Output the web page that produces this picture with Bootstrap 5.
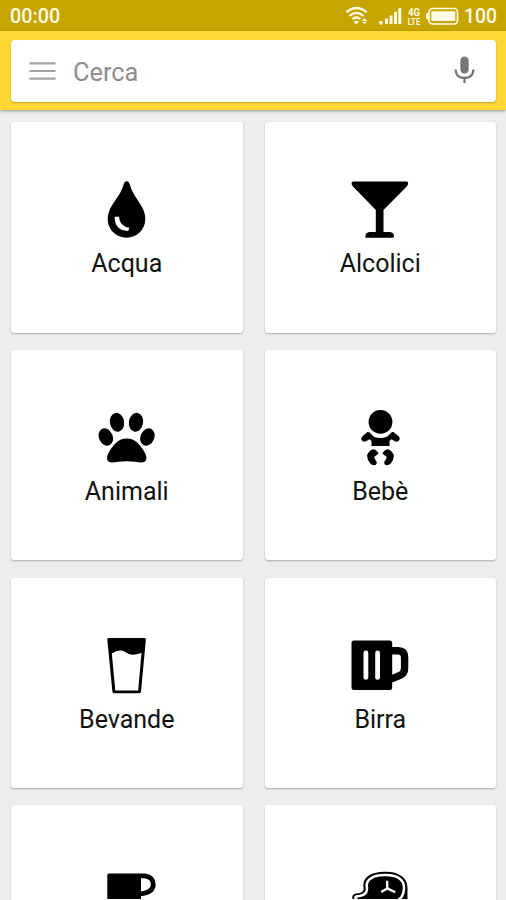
<!DOCTYPE html>
<html lang="it">
<head>
<meta charset="utf-8">
<meta name="viewport" content="width=device-width, initial-scale=1">
<title>Cerca</title>
<link href="https://cdn.jsdelivr.net/npm/bootstrap@5.3.0/dist/css/bootstrap.min.css" rel="stylesheet">
<style>
  body { background: #ededed; font-family: Roboto, "Liberation Sans", sans-serif; height: 900px; overflow: hidden; }
  .status-bar { height: 31px; background: #c7a500; color: #fffbe6; font-size: 19.8px; font-weight: 500; line-height: 33px; padding: 0 9px 0 10px; }
  .battery-level { font-size: 19.3px; }
  .app-bar { height: 79px; background: #fdd835; padding: 9px 10px 8px 11px; box-shadow: 0 1px 3px rgba(0,0,0,.4); }
  .search-box { height: 62px; border-radius: 4px; padding: 0 19px 0 18px; box-shadow: 0 1px 2px rgba(120,90,0,.45); }
  .search-input { font-size: 25.3px; color: #8e8e8e; padding: 4px 0 0; margin-left: 17px; line-height: 1.2; }
  .search-input::placeholder { color: #8e8e8e; opacity: 1; }
  .tiles { display: grid; grid-template-columns: 231.5px 231.5px; gap: 17.3px 22px; padding: 12px 10px 0 11px; }
  .tile { height: 210.5px; border-radius: 3px; padding-top: 57px; box-shadow: 0 1px 2px rgba(0,0,0,.28); color: #000; }
  .tile-partial { height: 94.6px; border-bottom-left-radius: 0; border-bottom-right-radius: 0; overflow: hidden; }
  .tile-label { font-size: 25px; line-height: 30px; margin-top: 10px; color: #111; }
</style>
</head>
<body>
<header>
  <div class="status-bar d-flex justify-content-between">
    <span>00:00</span>
    <div class="d-flex">
      <svg width="120" height="31" viewBox="344 0 120 31" fill="#fffbe6" aria-hidden="true">
        <g fill="none" stroke="#fffbe6" stroke-width="2.3">
          <path d="M346.3 12.2Q356.5 3.8 366.7 12.2M349.4 15.8Q356.5 10 363.6 15.8M352.3 19.2Q356.5 16 360.3 19"/>
        </g>
        <path d="M353.6 21.5Q356.3 19.8 359 21.5L356.3 24.6zM362 21l2.5-3 2.5 3zM362 21.8h5l-2.5 2.4z"/>
        <circle cx="380.8" cy="22.7" r="2"/>
        <path d="M385 18.5h3V24h-3zM389.5 15.5h3V24h-3zM394 11.7h3V24h-3zM398.3 8.3h3V24h-3z"/>
        <g font-family="Roboto, sans-serif" font-weight="700" text-anchor="middle">
          <text x="414" y="16" font-size="10" textLength="12" lengthAdjust="spacingAndGlyphs">4G</text>
          <text x="414" y="24.7" font-size="8.5" textLength="12.5" lengthAdjust="spacingAndGlyphs">LTE</text>
        </g>
        <rect x="429" y="8.5" width="28.5" height="15.5" rx="3.5" fill="none" stroke="#fffbe6" stroke-width="1.7"/>
        <rect x="431.3" y="11.3" width="24" height="9.8" rx="1"/>
        <path d="M428.2 12.5Q426 13 426 16.2Q426 19.4 428.2 20z"/>
      </svg>
      <span class="battery-level">100</span>
    </div>
  </div>
  <div class="app-bar position-relative">
    <div class="search-box bg-white d-flex align-items-center">
      <svg class="flex-shrink-0" width="27" height="20" viewBox="0 0 27 20" fill="none" stroke="#a3a3a3" stroke-width="2.2" aria-hidden="true"><path d="M.5 2.3h26M.5 10h26M.5 17.7h26"/></svg>
      <input class="search-input form-control border-0 shadow-none bg-transparent flex-grow-1" type="text" placeholder="Cerca" aria-label="Cerca">
      <svg class="flex-shrink-0" width="24" height="32" viewBox="0 0 24 32" aria-hidden="true"><rect x="7.3" y="1.5" width="8.4" height="17" rx="4.2" fill="#777"/><path d="M2.5 14.5Q3.1 23 11.5 23Q19.9 23 20.5 14.5M11.5 23v5" fill="none" stroke="#777" stroke-width="2.3"/></svg>
    </div>
  </div>
</header>

<main class="tiles">
  <div class="tile bg-white d-flex flex-column align-items-center">
    <svg width="60" height="60" viewBox="0 0 60 60" aria-hidden="true"><path d="M29.7 2.2C31.5 2.2 32 3.4 32.6 5C35.5 14.8 40 19.5 43.8 26Q48.3 33.2 48.3 40A18.8 18.8 0 0 1 10.7 40Q10.7 33.2 15.2 26C19.3 19.5 23.9 14.8 26.8 5C27.4 3.4 28 2.2 29.7 2.2z"/><path d="M17.7 37.8H22Q22.6 47.4 32.3 48.8L31.2 52Q17.5 51.5 17.7 37.8z" fill="#fff"/></svg>
    <div class="tile-label">Acqua</div>
  </div>
  <div class="tile bg-white d-flex flex-column align-items-center">
    <svg width="60" height="60" viewBox="0 0 60 60" aria-hidden="true"><path d="M3.3 2.5H56.5Q58.3 2.7 58.2 4.5Q58 6 56.7 7.5L33.5 31V53H40Q43.8 53.8 43.8 56.5V58.8H15.5V56.5Q15.8 53.6 19.4 53H25.8V31L3 7.5Q1.6 6 1.5 4.5Q1.5 2.7 3.3 2.5z"/></svg>
    <div class="tile-label">Alcolici</div>
  </div>
  <div class="tile bg-white d-flex flex-column align-items-center">
    <svg width="60" height="60" viewBox="0 0 60 60" aria-hidden="true"><ellipse cx="20" cy="15.3" rx="7.1" ry="9.5" transform="rotate(-10 20 15.3)"/><ellipse cx="39" cy="15.3" rx="7.1" ry="9.5" transform="rotate(10 39 15.3)"/><ellipse cx="8.8" cy="30" rx="6.9" ry="9" transform="rotate(-24 8.8 30)"/><ellipse cx="50.4" cy="30" rx="6.9" ry="9" transform="rotate(24 50.4 30)"/><path d="M29.7 31.4C38.5 31.6 42.5 37.5 46 42.5C49 47 50.3 51 48.8 53.5C46.5 57.3 40 54.3 29.7 54.3S13 57.3 10.7 53.5C9.3 51 10.5 47 13.5 42.5C17 37.5 21 31.6 29.7 31.4z"/></svg>
    <div class="tile-label">Animali</div>
  </div>
  <div class="tile bg-white d-flex flex-column align-items-center">
    <svg width="60" height="60" viewBox="0 0 60 60" aria-hidden="true"><circle cx="30.5" cy="14.9" r="11.9"/><path d="M17.5 25Q19.2 24.7 20.5 26.4L24 29.7Q30.5 32.2 37 29.7L40.5 26.4Q41.8 24.7 43.5 25L49 29.5Q50.5 31.5 48.8 33.7Q47.3 35.4 45 34.3L41.5 32.3L39.5 34V39H21.5V34L19.5 32.3L16 34.3Q13.7 35.4 12.2 33.7Q10.5 31.5 12 29.5z"/><path id="baby-leg" d="M22.6 42.2Q26 42 28.7 46.5L24.2 50Q25 52.8 26.7 54.7Q27 57.8 24.3 58.3Q21.6 58.2 20 56.2Q17.4 53 17 48.8Q18.2 44.5 22.6 42.2z"/><use href="#baby-leg" transform="matrix(-1 0 0 1 61 0)"/></svg>
    <div class="tile-label">Bebè</div>
  </div>
  <div class="tile bg-white d-flex flex-column align-items-center">
    <svg width="60" height="60" viewBox="0 0 60 60" aria-hidden="true"><path d="M11.5 2.9H47.8Q49 2.9 48.9 4.5L44 56.5Q43.8 58.2 42.5 58.2H17Q15.6 58.2 15.4 56.5L10.3 4.5Q10.2 2.9 11.5 2.9z"/><path d="M14.8 18.5Q20.5 14.8 24.7 15.6C29 16.5 31.5 20.3 36.5 19.8Q41 19.4 44.5 17.8L41.2 55.4H18.3z" fill="#fff"/></svg>
    <div class="tile-label">Bevande</div>
  </div>
  <div class="tile bg-white d-flex flex-column align-items-center">
    <svg width="60" height="60" viewBox="0 0 60 60" aria-hidden="true"><rect x="1.5" y="5.4" width="40.7" height="49.7" rx="2.5"/><path d="M41 15.8H48Q54.6 15.8 54.6 22.5V33Q54.6 38.5 50 40.4L41 44.2" fill="none" stroke="#000" stroke-width="7.4"/><rect x="13.5" y="15.5" width="4.8" height="29.3" rx="2.4" fill="#fff"/><rect x="25.2" y="15.5" width="4.8" height="29.3" rx="2.4" fill="#fff"/></svg>
    <div class="tile-label">Birra</div>
  </div>
  <div class="tile tile-partial bg-white d-flex flex-column align-items-center">
    <svg class="flex-shrink-0" width="60" height="37" viewBox="0 0 60 37" aria-hidden="true"><path d="M12 11.4H42.5Q44 11.4 44 13V38H10.3V13Q10.3 11.4 12 11.4z"/><path d="M43 13.8H48Q56.3 15 56.3 22.8Q56 30.5 43 31.8" fill="none" stroke="#000" stroke-width="4.8"/></svg>
  </div>
  <div class="tile tile-partial bg-white d-flex flex-column align-items-center">
    <svg class="flex-shrink-0" width="60" height="37" viewBox="0 0 60 37" aria-hidden="true"><path d="M34.5 9.8C48 9.2 57.5 15 57.5 26V38Q54 46 42 46H18Q3 45 2.2 35Q2.5 31.5 8.5 31.3Q14.3 30.5 13.5 25C12 15.5 21 10 34.5 9.8z"/><path d="M34.5 13.1C46.5 12.8 54 17 54 26Q53.5 40 40 40H20Q6.5 40 5.3 35.5Q6 34 9.5 34Q18 32.8 16.8 25C15.5 17 24 13.2 34.5 13.1z" fill="none" stroke="#fff" stroke-width="2.5"/><path d="M37.2 18.8V26.4M37.2 26.4L31.2 30M37.2 26.4L45.3 30.2" fill="none" stroke="#fff" stroke-width="2.3"/></svg>
  </div>
</main>
<script src="https://cdn.jsdelivr.net/npm/bootstrap@5.3.0/dist/js/bootstrap.bundle.min.js"></script>
</body>
</html>
